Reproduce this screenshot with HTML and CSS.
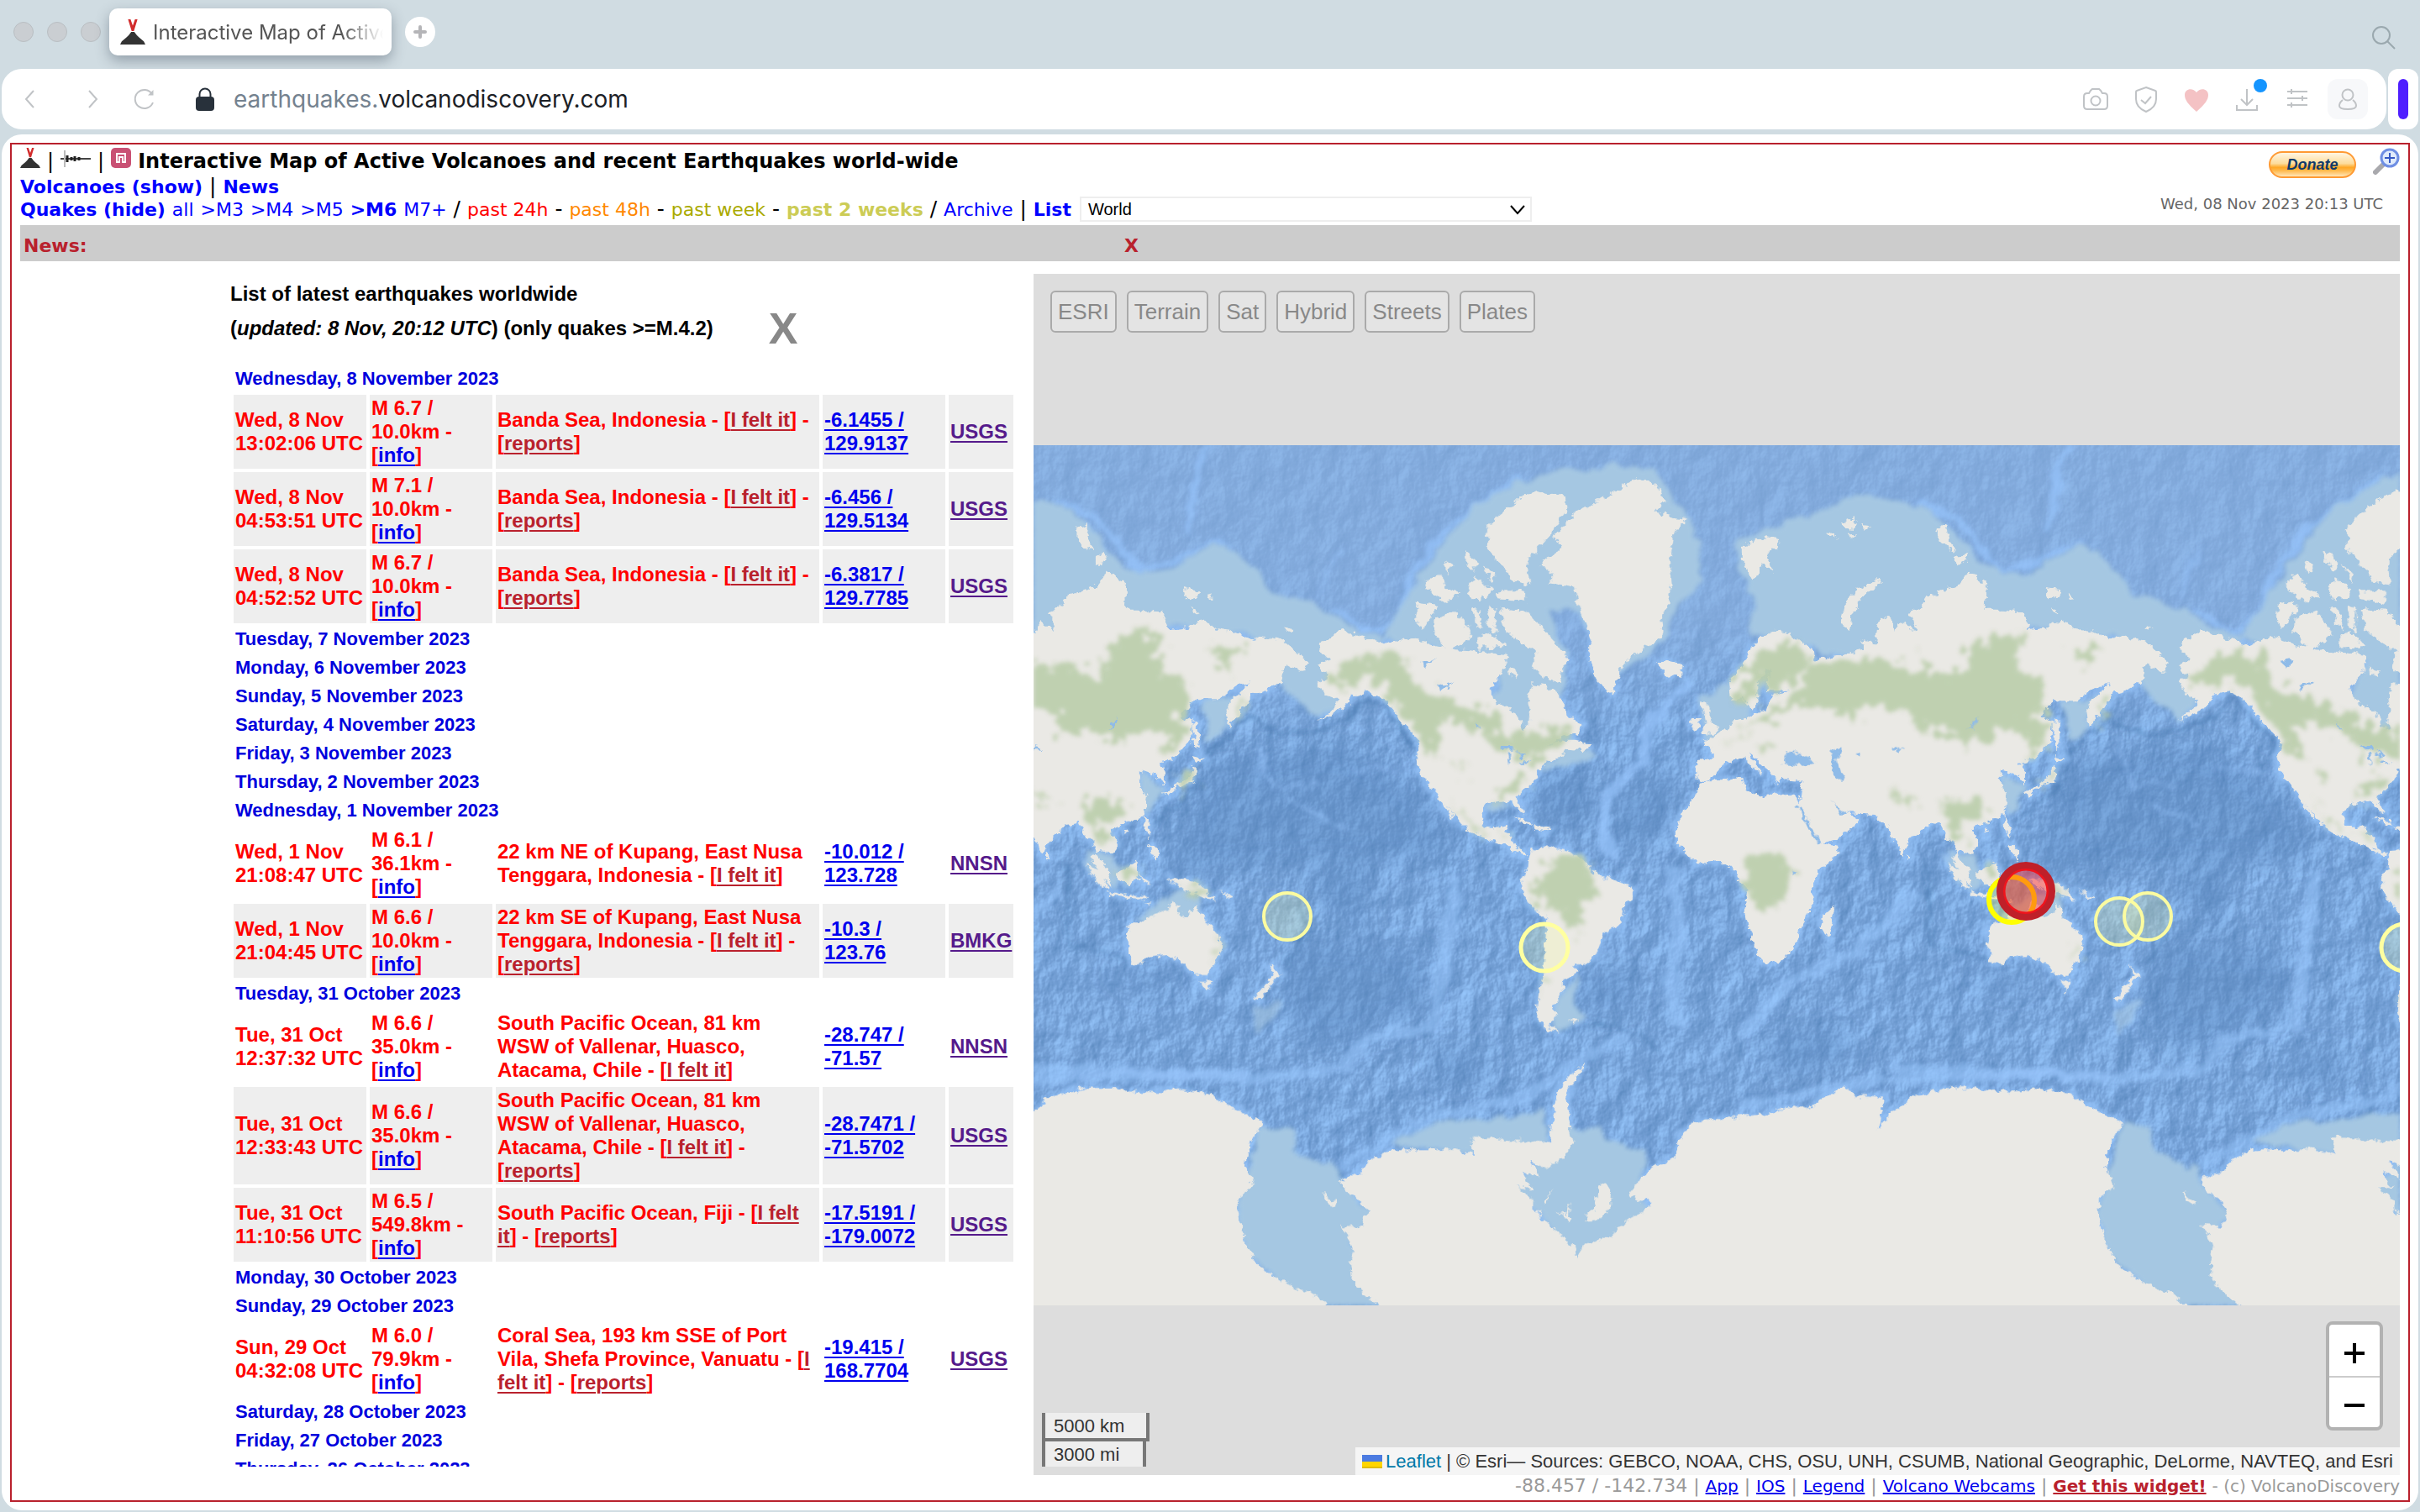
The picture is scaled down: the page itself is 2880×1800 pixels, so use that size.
FILE: index.html
```html
<!DOCTYPE html>
<html lang="en">
<head>
<meta charset="utf-8">
<title>Interactive Map of Active Volcanoes and recent Earthquakes world-wide</title>
<link rel="stylesheet" href="styles.css">
</head>
<body>
<svg class="defs" aria-hidden="true">
  <symbol id="volcano" viewBox="0 0 16 16">
    <path d="M5 0h1.6L8 4 9.400 0H11L8.700 7.500H7.300z" fill="#d22c2c"/>
    <path d="M7 8h2l1.500 2 1.500 1.500 3 2.500 1 2H0l1-2 3-2.500L5.500 10z" fill="#333"/>
  </symbol>
</svg>

<header class="browser">
  <div class="tabs">
    <span class="dot"></span><span class="dot"></span><span class="dot"></span>
    <div class="tab">
      <svg class="favicon"><use href="#volcano"/></svg>
      <span class="tab-title">Interactive Map of Active</span>
    </div>
    <button class="new-tab" aria-label="New tab"><svg width="16" height="16"><path d="M8 2v12M2 8h12" stroke="#b5b5b8" stroke-width="4" stroke-linecap="round"/></svg></button>
    <button class="icon tab-search" aria-label="Search tabs"><svg width="30" height="30" fill="none" stroke="#9aa8ae" stroke-width="2"><circle cx="12" cy="12" r="10"/><path d="M19 19l9 9"/></svg></button>
  </div>
  <div class="bars">
    <div class="toolbar">
      <nav class="nav">
        <button class="icon" aria-label="Back"><svg width="28" height="28"><path d="M18 4L9 14l9 10"/></svg></button>
        <button class="icon" aria-label="Forward"><svg width="28" height="28"><path d="M10 4l9 10-9 10"/></svg></button>
        <button class="icon reload" aria-label="Reload"><svg width="28" height="28"><path d="M24 18A11 11 0 1 1 23 8"/><path d="M18 9.500h6.500V3z" fill="#c0c3c6" stroke="none"/></svg></button>
      </nav>
      <svg class="lock" width="24" height="28"><path d="M5.500 12V8a6.500 6.500 0 0 1 13 0v4" fill="none" stroke="#28313b" stroke-width="2"/><rect x="1" y="11" width="22" height="17" rx="4" fill="#28313b"/></svg>
      <span class="url"><span class="sub">earthquakes.</span>volcanodiscovery.com</span>
      <div class="tools">
        <button class="icon" aria-label="Snapshot"><svg width="32" height="32"><path d="M2 13q0-4 4-4h2q2-4 4-5h8q2 1 4 5h2q4 0 4 4v11q0 4-4 4H6q-4 0-4-4z"/><circle cx="16" cy="18" r="5.500"/></svg></button>
        <button class="icon" aria-label="Privacy"><svg width="32" height="32"><path d="M16 2l11 4q1 0 1 2v8q0 10-12 15Q4 26 4 16V8q0-2 1-2z"/><path d="M10 17l5 4 7-8"/></svg></button>
        <button class="icon" aria-label="Favourite"><svg width="32" height="32"><path d="M16 31C6 22 2 17 2 11 2 3 12 2 16 8c4-6 14-5 14 3 0 6-4 11-14 20z" fill="#f4c2c4" stroke="none"/></svg></button>
        <button class="icon download" aria-label="Downloads"><svg width="32" height="32"><path d="M16 4v19M9 16l7 7 7-7M4 23v6h24v-6"/></svg><span class="badge"></span></button>
        <button class="icon" aria-label="Settings"><svg width="32" height="32"><path d="M4 7h24M4 15h24M4 23h24M9 4v6M22 12v6M9 20v6"/></svg></button>
        <button class="icon profile" aria-label="Profile"><svg width="32" height="32"><circle cx="16" cy="11" r="6.500"/><path d="M10 17q-4 3-4 7 0 4 10 4t10-4q0-4-4-7"/></svg></button>
      </div>
    </div>
    <button class="side" aria-label="Sidebar"><span></span></button>
  </div>
</header>

<main class="page">
  <div class="frame">
    <div class="head">
      <div class="head-left">
        <h1 class="title"><a href="#"><svg width="24" height="24"><use href="#volcano"/></svg></a><span class="bar">|</span><a href="#"><svg width="36" height="24"><path d="M0 13h36" stroke="#444" stroke-width="2"/><path d="M5 3v20" stroke="#bbb" stroke-width="2"/><path d="M8 9v8M13 11v4M17 10v6M22 11v4" stroke="#222" stroke-width="3"/></svg></a><span class="bar">|</span><a href="#"><svg width="24" height="24"><rect width="24" height="24" rx="5" fill="#c95174"/><path d="M7 17V7h10v10h-3v-6h-4v6z" fill="none" stroke="#fff" stroke-width="2"/></svg></a><span>Interactive Map of Active Volcanoes and recent Earthquakes world-wide</span></h1>
        <div class="line"><span><a href="#"><b>Volcanoes (show)</b></a> | <a href="#"><b>News</b></a></span></div>
        <div class="line"><span><a href="#"><b>Quakes (hide)</b></a> <a href="#">all</a> <a href="#">&gt;M3</a> <a href="#">&gt;M4</a> <a href="#">&gt;M5</a> <a href="#"><b>&gt;M6</b></a> <a href="#">M7+</a> / <a href="#" class="h24">past 24h</a> - <a href="#" class="h48">past 48h</a> - <a href="#" class="week">past week</a> - <a href="#" class="weeks"><b>past 2 weeks</b></a> / <a href="#">Archive</a> | <a href="#"><b>List</b></a></span><span class="select"><select aria-label="Region"><option>World</option></select><svg width="18" height="12"><path d="M1 1l8 9 8-9" fill="none" stroke="#000" stroke-width="2"/></svg></span></div>
      </div>
      <div class="head-right">
        <div class="actions">
          <button class="donate">Donate</button>
          <a href="#" aria-label="Enlarge"><svg width="32" height="32"><path d="M3 29l11-11" stroke="#a9a9ad" stroke-width="6" stroke-linecap="round"/><circle cx="20" cy="12" r="10" fill="#e0ebfb" stroke="#6f8fe4" stroke-width="3"/><path d="M20 6v12M14 12h12" stroke="#3558c4" stroke-width="2"/></svg></a>
        </div>
        <div class="clock">Wed, 08 Nov 2023 20:13 UTC</div>
      </div>
    </div>
    <div class="news"><b>News:</b><button class="news-close">X</button></div>

    <div class="content">
      <section class="list">
        <div class="list-head">
          <h2>List of latest earthquakes worldwide<br>(<i>updated: 8 Nov, 20:12 UTC</i>) (only quakes &gt;=M.4.2)</h2>
          <button class="list-close">X</button>
        </div>
        <table>
          <colgroup><col class="c1"><col class="c2"><col class="c3"><col class="c4"><col class="c5"></colgroup>
          <tr><th colspan="5">Wednesday, 8 November 2023</th></tr>
          <tr class="q alt"><td>Wed, 8 Nov 13:02:06 UTC</td><td>M 6.7 / 10.0km - [<a href="#">info</a>]</td><td>Banda Sea, Indonesia - [<a href="#" class="r">I felt it</a>] - [<a href="#" class="r">reports</a>]</td><td><a href="#">-6.1455 / 129.9137</a></td><td><a href="#" class="v">USGS</a></td></tr>
          <tr class="q alt"><td>Wed, 8 Nov 04:53:51 UTC</td><td>M 7.1 / 10.0km - [<a href="#">info</a>]</td><td>Banda Sea, Indonesia - [<a href="#" class="r">I felt it</a>] - [<a href="#" class="r">reports</a>]</td><td><a href="#">-6.456 / 129.5134</a></td><td><a href="#" class="v">USGS</a></td></tr>
          <tr class="q alt"><td>Wed, 8 Nov 04:52:52 UTC</td><td>M 6.7 / 10.0km - [<a href="#">info</a>]</td><td>Banda Sea, Indonesia - [<a href="#" class="r">I felt it</a>] - [<a href="#" class="r">reports</a>]</td><td><a href="#">-6.3817 / 129.7785</a></td><td><a href="#" class="v">USGS</a></td></tr>
          <tr><th colspan="5">Tuesday, 7 November 2023</th></tr>
          <tr><th colspan="5">Monday, 6 November 2023</th></tr>
          <tr><th colspan="5">Sunday, 5 November 2023</th></tr>
          <tr><th colspan="5">Saturday, 4 November 2023</th></tr>
          <tr><th colspan="5">Friday, 3 November 2023</th></tr>
          <tr><th colspan="5">Thursday, 2 November 2023</th></tr>
          <tr><th colspan="5">Wednesday, 1 November 2023</th></tr>
          <tr class="q"><td>Wed, 1 Nov 21:08:47 UTC</td><td>M 6.1 / 36.1km - [<a href="#">info</a>]</td><td>22 km NE of Kupang, East Nusa Tenggara, Indonesia - [<a href="#" class="r">I felt it</a>]</td><td><a href="#">-10.012 / 123.728</a></td><td><a href="#" class="v">NNSN</a></td></tr>
          <tr class="q alt"><td>Wed, 1 Nov 21:04:45 UTC</td><td>M 6.6 / 10.0km - [<a href="#">info</a>]</td><td>22 km SE of Kupang, East Nusa Tenggara, Indonesia - [<a href="#" class="r">I felt it</a>] - [<a href="#" class="r">reports</a>]</td><td><a href="#">-10.3 /<br>123.76</a></td><td><a href="#" class="v">BMKG</a></td></tr>
          <tr><th colspan="5">Tuesday, 31 October 2023</th></tr>
          <tr class="q"><td>Tue, 31 Oct 12:37:32 UTC</td><td>M 6.6 / 35.0km - [<a href="#">info</a>]</td><td>South Pacific Ocean, 81 km WSW of Vallenar, Huasco, Atacama, Chile - [<a href="#" class="r">I felt it</a>]</td><td><a href="#">-28.747 /<br>-71.57</a></td><td><a href="#" class="v">NNSN</a></td></tr>
          <tr class="q alt"><td>Tue, 31 Oct 12:33:43 UTC</td><td>M 6.6 / 35.0km - [<a href="#">info</a>]</td><td>South Pacific Ocean, 81 km WSW of Vallenar, Huasco, Atacama, Chile - [<a href="#" class="r">I felt it</a>] - [<a href="#" class="r">reports</a>]</td><td><a href="#">-28.7471 /<br>-71.5702</a></td><td><a href="#" class="v">USGS</a></td></tr>
          <tr class="q alt"><td>Tue, 31 Oct 11:10:56 UTC</td><td>M 6.5 / 549.8km - [<a href="#">info</a>]</td><td>South Pacific Ocean, Fiji - [<a href="#" class="r">I felt it</a>] - [<a href="#" class="r">reports</a>]</td><td><a href="#">-17.5191 /<br>-179.0072</a></td><td><a href="#" class="v">USGS</a></td></tr>
          <tr><th colspan="5">Monday, 30 October 2023</th></tr>
          <tr><th colspan="5">Sunday, 29 October 2023</th></tr>
          <tr class="q"><td>Sun, 29 Oct 04:32:08 UTC</td><td>M 6.0 / 79.9km - [<a href="#">info</a>]</td><td>Coral Sea, 193 km SSE of Port Vila, Shefa Province, Vanuatu - [<a href="#" class="r">I felt it</a>] - [<a href="#" class="r">reports</a>]</td><td><a href="#">-19.415 / 168.7704</a></td><td><a href="#" class="v">USGS</a></td></tr>
          <tr><th colspan="5">Saturday, 28 October 2023</th></tr>
          <tr><th colspan="5">Friday, 27 October 2023</th></tr>
          <tr><th colspan="5">Thursday, 26 October 2023</th></tr>
        </table>
      </section>

      <section class="map">
        <svg class="world" viewBox="0 0 1626 1024" preserveAspectRatio="xMidYMid slice" role="img" aria-label="World map with recent earthquakes">
          <defs>
            <filter id="sea" x="0" y="0" width="100%" height="100%" color-interpolation-filters="sRGB">
              <feTurbulence type="fractalNoise" baseFrequency=".03 .022" numOctaves="5" seed="21"/>
              <feDiffuseLighting surfaceScale="5" diffuseConstant="1" lighting-color="#fff"><feDistantLight azimuth="220" elevation="45"/></feDiffuseLighting>
              <feComponentTransfer><feFuncR type="table" tableValues=".34 .38 .46 .60"/><feFuncG type="table" tableValues=".51 .56 .63 .79"/><feFuncB type="table" tableValues=".73 .77 .84 1"/></feComponentTransfer>
            </filter>
            <filter id="coast" x="0" y="0" width="100%" height="100%" filterUnits="userSpaceOnUse">
              <feTurbulence type="fractalNoise" baseFrequency=".12" numOctaves="3" seed="3"/>
              <feDisplacementMap in="SourceGraphic" scale="11" xChannelSelector="R" yChannelSelector="G"/>
            </filter>
            <filter id="wood" x="0" y="0" width="100%" height="100%" filterUnits="userSpaceOnUse">
              <feTurbulence type="fractalNoise" baseFrequency=".07" numOctaves="4" seed="5" result="n"/>
              <feDisplacementMap in="SourceGraphic" in2="n" scale="44" xChannelSelector="R" yChannelSelector="G"/>
              <feGaussianBlur stdDeviation="2.500"/>
            </filter>
            <filter id="soft" x="0" y="0" width="100%" height="100%" filterUnits="userSpaceOnUse">
              <feTurbulence type="fractalNoise" baseFrequency=".05" numOctaves="2" seed="2" result="n"/>
              <feDisplacementMap in="SourceGraphic" in2="n" scale="18" xChannelSelector="R" yChannelSelector="G"/>
              <feGaussianBlur stdDeviation="2.500"/>
            </filter>
            <filter id="haze" x="0" y="0" width="100%" height="100%" filterUnits="userSpaceOnUse"><feGaussianBlur stdDeviation="14"/></filter>
            <linearGradient id="north" x2="0" y2="1"><stop offset="0" stop-color="#8cb1e0" stop-opacity=".6"/><stop offset=".2" stop-color="#8cb1e0" stop-opacity=".6"/><stop offset=".34" stop-color="#8cb1e0" stop-opacity="0"/></linearGradient>

            <g id="land">
              <g transform="translate(0 -10) scale(.52934 .33333)">
                <path d="M640 745L690 690 740 715 800 740 850 715 905 745 950 760 1000 765 1060 780 1065 800 1050 850 1025 900 1030 940 1060 965 1085 990 1100 1045 1112 1040 1115 990 1110 940 1120 880 1150 885 1185 930 1200 990 1235 1030 1225 1060 1190 1070 1160 1105 1185 1085 1215 1085 1250 1100 1240 1120 1200 1115 1185 1140 1160 1160 1135 1190 1125 1230 1085 1290 1105 1345 1090 1330 1075 1300 1020 1310 1010 1350 1015 1390 1040 1400 1065 1385 1060 1410 1080 1435 1085 1470 1110 1490 1100 1495 1060 1460 1010 1430 975 1405 960 1380 935 1330 915 1290 895 1255 870 1200 860 1140 870 1090 840 1040 815 990 790 940 755 910 720 925 690 975 640 1015 685 950 650 910 640 880 665 850 635 820 665 795 645 760z"/>
                <path d="M903 1270L915 1285 945 1355 942 1368z"/>
                <path d="M865 590L910 600 890 650 875 690 860 650zM900 650L950 620 970 660 985 710 960 745 930 760 900 700zM985 610L1002 620 1010 690 995 670zM1020 605L1040 615 1038 700 1022 680zM1050 615L1110 620 1140 680 1170 730 1205 800 1185 830 1185 880 1150 860 1120 820 1130 770 1090 730 1060 690zM1068 825L1085 835 1090 862 1070 850zM1000 710L1030 700 1060 750 1000 755z"/>
                <path d="M1130 195L1190 210 1205 250 1180 310 1140 390 1110 440 1115 530 1080 520 1060 480 1020 400 1020 330 1045 280 1090 220zM1045 550L1105 550 1105 590 1045 580zM880 520L910 490 930 540 960 560 925 590 885 545zM968 410L1000 450 990 480 970 440zM925 440L945 460 930 490zM990 500L1030 540 1020 575 990 580 975 540zM1010 460L1035 490 1030 520z"/>
                <path d="M1355 150L1400 170 1420 230 1395 270 1440 285 1470 290 1440 350 1430 440 1435 520 1425 600 1410 650 1415 710 1360 765 1320 830 1300 920 1270 880 1250 800 1255 720 1235 640 1215 540 1160 520 1170 490 1140 455 1190 400 1170 360 1210 280 1290 210z"/>
                <path d="M1402 805L1430 798 1460 820 1455 850 1425 860zM1500 940L1520 960 1520 1010 1540 1040 1530 1060 1500 1062 1512 1020zM1480 1005L1500 1005 1498 1045 1480 1050z"/>
                <path d="M1075 1360L1110 1370 1125 1390 1100 1380zM1130 1390L1165 1398 1150 1408 1128 1402z"/>
              </g>
              <g transform="translate(820 -10) scale(.52934 .33333)">
                <path d="M-59 1155L-55 1225-35 1232-15 1205 5 1170 30 1150 50 1140 60 1170 90 1210 75 1175 60 1130 85 1160 115 1210 125 1240 135 1210 130 1195 140 1225 180 1230 175 1290 175 1320 220 1455 260 1435 300 1385 305 1365 280 1345 290 1345 340 1350 370 1385 405 1495 420 1440 460 1385 490 1380 500 1420 520 1450 530 1500 555 1555 560 1610 540 1570 515 1500 540 1480 560 1490 575 1460 560 1400 590 1380 635 1350 640 1290 625 1245 625 1190 665 1210 680 1250 680 1200 670 1160 700 1150 740 1080 745 1020 715 1000 745 940 800 940 830 900 870 880 820 960 825 1040 865 950 875 920 900 910 940 880 945 840 955 810 990 840 1005 810 950 730 900 715 880 725 840 700 790 685 760 650 735 680 690 690 675 625 620 620 590 620 595 530 550 480 530 530 460 570 445 610 420 630 435 690 400 660 385 700 375 650 355 640 345 740 310 725 320 760 240 790 210 800 200 760 150 700 120 690 80 720 50 800 15 880 20 950 45 930 65 980 80 950 80 880 110 820 100 870 100 910 150 905 110 925 100 970 60 1000 30 1015 0 1050-40 1085-45 1100-25 1110-25 1150z"/>
                <path d="M-50 1240L-20 1225 0 1225 40 1215 45 1250 90 1290 110 1270 160 1285 175 1310 190 1380 215 1450 265 1465 245 1510 210 1560 200 1620 205 1664 175 1757 165 1809 135 1866 95 1886 80 1850 60 1768 50 1685 55 1623 35 1582 30 1550 0 1520-30 1525-60 1525-85 1480-104 1450-104 1390-80 1320-60 1280zM252 1675L240 1790 220 1760 228 1710z"/>
                <path d="M350 505L355 520 310 580 290 640 285 690 265 670 275 600 300 550zM45 390L100 355 130 370 120 400 95 420 115 480 90 450 70 515 45 440zM230 345L250 335 258 360zM270 310L300 285 295 330 280 325zM310 315L335 318 320 335zM285 350L300 345 295 370zM480 330L500 315 520 410 490 380zM525 430L545 410 552 440 525 465zM725 540L760 550 755 575 730 580zM775 560L792 580 780 582zM738 610L755 625 745 630zM945 685L955 678 968 688 955 695z"/>
                <path d="M745 1010L755 1020 757 1115 746 1100zM745 1140L770 1150 750 1168zM745 1175L752 1190 745 1235 710 1250 688 1282 680 1268 720 1235 738 1200zM632 1350L645 1390 650 1430 635 1400zM645 1450L665 1480 665 1515 650 1480zM415 1485L422 1500 416 1515zM590 1400L598 1408 588 1415zM630 1330L637 1345 632 1355z"/>
              </g>
              <g transform="translate(0 500) scale(.52934 .34439)">
                <path d="M575 20L615-10 622 50 600 70 575 50z" transform="translate(1549)"/>
                <path d="M2053-10L2085 20 2104 80 2090 75 2065 30zM2104 93L2185 108 2185 118 2110 106zM2235 45L2285 50 2315 75 2330 100 2345 125 2315 105 2275 90 2255 65zM2172 22L2180 45 2195 60 2180 65zM2345 80L2380 110 2376 116zM2205 125L2195 133 2180 130z"/>
                <path d="M2204 170L2234 155 2244 130 2264 140 2259 165 2279 180 2294 160 2299 130 2314 175 2354 240 2359 290 2339 350 2324 380 2299 380 2274 340 2234 310 2194 320 2174 340 2154 340 2144 250 2149 210 2184 190zM2309 400L2334 400 2324 435z"/>
                <path d="M530 340L545 370 557 378 540 402 520 440 510 470 497 462 530 400 538 378z"/>
                <path d="M1118-53L1165-60 1200-48 1235-20 1265 35 1300 50 1345 75 1345 110 1325 150 1320 200 1280 240 1270 290 1240 345 1215 340 1225 370 1190 400 1190 440 1170 480 1175 520 1160 555 1185 580 1150 565 1130 520 1135 450 1145 380 1150 270 1155 190 1130 160 1105 110 1095 50 1110 10 1112-30zM1207 530L1224 530 1218 545z"/>
                <path d="M810 1560L750 1490 715 1440 710 1370 718 1330 705 1270 690 1245 735 1250 752 1205 735 1160 700 1125 690 1080 740 1060 755 1020 800 985 900 985 940 980 990 1000 985 940 1100 950 1160 955 1165 900 1175 800 1190 750 1240 685 1200 790 1205 900 1212 960 1195 1010 1150 1050 1115 1025 1140 1085 1100 1060 1120 1120 1088 1110 1125 1160 1125 1190 1170 1260 1218 1320 1220 1360 1240 1310 1300 1285 1310 1250 1380 1190 1385 1150 1360 1165 1340 1130 1380 1050 1440 1010 1450 950 1480 890 1568 870 1660 855 1720 830 1745 840 1780 800 1820 765 1850 795 1910 800 1900 915 1920 870 1975 800 2050 770 2110 770 2150 780 2220 785 2250 770 2330 790 2380 840 2450 890 2420 960 2410 1040 2430 1110 2395 1150 2395 1200 2410 1300 2440 1390 2520 1460 2560 1480 2620 1560z"/>
                <path d="M1280 1095L1300 1120 1298 1180 1280 1225 1240 1230 1240 1210 1262 1190 1268 1110zM1165 1120L1155 1172 1148 1165zM1207 1165L1205 1230 1175 1200 1200 1210zM650 1130L680 1165 675 1180 655 1160z"/>
              </g>
            </g>

            <g id="shelf" fill="#a5c7e2">
              <g transform="translate(820 -10) scale(.52934 .33333)">
                <path d="M60 690L70 570 40 480 30 370 180 290 300 205 380 230 470 260 530 360 590 465 675 490 805 380 860 440 930 560 1045 620 1085 670 1175 720 1100 760 1060 980 1025 1005 945 900 900 720 600 660 300 800z"/>
                <path d="M760 935L850 935 810 1060 775 1080zM620 1190L680 1250 660 1330 635 1350zM-50 930L110 830 60 1010-30 1100zM500 1480L570 1500 580 1570 530 1600z"/>
              </g>
              <g transform="translate(0 -10) scale(.52934 .33333)"><path d="M780 725L845 560 910 400 990 250 1100 150 1300 100 1400 110 1430 200 1480 300 1500 400 1500 510 1440 640 1420 720 1310 860 1220 620 1160 620 1200 780 1195 900 1100 1050 1020 960 1060 800z"/><path d="M1200 1070L1270 1150 1230 1160 1130 1200 1190 1110zM1000 1305L1090 1310 1020 1330z"/></g>
              <g transform="translate(0 500) scale(.52934 .34439)"><path d="M2160 180L2265 90 2310 120 2310 190 2250 210zM2040-20L2130 40 2110 90zM1225 370L1215 500 1240 520 1200 560 1180 570 1165 500zM1205 900L1270 915 1310 970 1375 985 1360 1100 1385 1200 1220 1370 1080 1120zM515 900L580 900 590 1000 650 1035 690 1045 690 1100 760 1200 720 1300 800 1560 640 1560 480 1340 455 1200zM800 960L900 890 1000 880 1150 850 1160 960 990 1000z"/><path d="M500 490L560 470 530 550 495 590z" opacity=".6"/></g>
            </g>

            <g id="woods" fill="#bacdaa">
              <g transform="translate(820 -10) scale(.52934 .33333)">
                <path d="M190 810L280 795 400 800 420 850 455 790 470 850 530 850 600 690 670 710 665 840 725 870 735 950 700 1000 740 1060 690 1150 680 1060 640 1050 560 1090 520 1050 440 1060 430 990 310 960 300 1040 285 980 190 960 120 1000 30 1080 0 1110 60 1040 120 960 180 900zM90 770L150 730 190 800 150 890 110 900 90 850 60 950 25 930 50 840zM540 750L580 740 570 790zM780 750L860 750 820 830zM840 960L860 940 840 1040zM490 1310L560 1290 600 1330 570 1380 530 1380 560 1450 530 1450zM380 1250L400 1300 460 1330 440 1320zM750 1180L740 1235 700 1250zM80 1080L120 1100 110 1130z"/>
                <path d="M50 1500L120 1490 150 1560 140 1640 90 1700 60 1640z"/>
              </g>
              <g transform="translate(0 -10) scale(.52934 .33333)"><path d="M670 870L700 800 760 770 830 780 860 890 940 940 1030 990 1080 1060 1200 1050 1190 1100 1130 1150 1060 1130 1010 1050 920 1010 900 1090 920 1150 880 1120 840 1010 770 860 700 900zM1030 1290L1090 1210 1110 1220 1070 1290zM950 1190L965 1180 965 1230zM935 1300L980 1370 1010 1420 990 1410zM1040 1410L1080 1440 1070 1450z"/></g>
              <g transform="translate(0 500) scale(.52934 .34439)"><path d="M1125 60L1150 0 1190-30 1250 0 1270 80 1220 140 1240 240 1200 220 1180 150 1130 120zM1145 370L1150 420 1140 470zM2260 60L2320 80 2310 100zM2345 250L2355 290 2330 350 2345 300zM2130 20L2165 0 2160 60z"/></g>
            </g>

            <g id="lakes" fill="#8fbbe8">
              <g transform="translate(820 -10) scale(.52934 .33333)">
                <path d="M135 1170L150 1125 175 1130 210 1165 180 1175zM245 1125L270 1115 255 1150 275 1225 255 1225 245 1170zM300 1128L310 1128 305 1142zM165 1315L175 1320 220 1445 212 1455zM245 1300L265 1330 282 1345 265 1347zM575 995L570 1020 550 1045 560 1025zM385 1110L410 1118 385 1120zM155 1550L165 1560 158 1575z"/>
              </g>
              <g transform="translate(0 -10) scale(.52934 .33333)"><path d="M1050 1105L1075 1100 1080 1118 1050 1115zM1065 1130L1075 1125 1070 1175zM1085 1120L1105 1140 1095 1150zM1095 1160L1120 1158 1100 1170zM870 800L900 795 880 825zM910 890L945 875 915 910zM995 1015L1010 1050 1000 1040z"/></g>
            </g>

            <g id="relief" fill="none" stroke-linecap="round" stroke-linejoin="round">
              <g transform="translate(0 -10) scale(.52934 .33333)" stroke="#97c4fc">
                <path d="M1470 880L1380 1030 1370 1160 1290 1280 1280 1400 1300 1500" stroke-width="30" opacity=".7"/>
                <path d="M350 330L370 100 400 30M60 240L150 300 240 480 330 440 420 375M680 620L760 700 830 640 850 500 930 330 1090 150" stroke-width="20" opacity=".7"/>
                <path d="M480 985L520 1040 580 1065 650 1045 700 1010 755 935 800 980 860 1120M480 1000L370 1170 365 1260 260 1390" stroke="#4d7db3" stroke-width="8" opacity=".8"/>
                <path d="M500 1080L540 1250 640 1240M570 1300L700 1395M720 1190L860 1190M640 570L690 390" stroke-width="8" opacity=".6"/>
              </g>
              <g transform="translate(0 500) scale(.52934 .34439)" stroke="#97c4fc">
                <path d="M1440 20L1450 250 1430 400 1450 550M950 40L930 250 900 560 750 600 700 700 500 740M1980 100L1850 300 1700 400 1600 580M520 740L0 700M1940 740L2400 720M1900 740L1600 830M700 1030L900 870 1100 810 1240 660 1320 600" stroke-width="34" opacity=".55"/>
                <path d="M1100 110L1150 200 1150 300 1130 560M1180 570L1290 550 1370 590 1400 640M600 130L610 220 570 340M2010 0L2012 270 2180 340M2060 20L2110 90 2200 120" stroke="#4d7db3" stroke-width="7" opacity=".8"/>
              </g>
            </g>
            <g id="deep" fill="#5482ba">
              <g transform="translate(0 -10) scale(.52934 .33333)"><path d="M400 1150L700 1100 860 1250 950 1500 300 1560zM1120 1240L1240 1180 1270 1400 1150 1380zM1310 1300L1440 1180 1430 1400 1300 1500z"/></g>
              <g transform="translate(0 500) scale(.52934 .34439)"><path d="M600 250L880 300 880 500 640 650 560 480zM1240 380L1340 370 1350 490 1230 490zM1640 620L1800 560 1850 650 1700 740zM600 50L760 0 740 250zM2090 370L2250 390 2200 440zM900 640L1020 660 1000 740 900 740z"/></g>
            </g>
            <g id="quakes" fill="#ff9" fill-opacity=".22" stroke="#fbfba0" stroke-width="4">
              <circle cx="302" cy="561" r="28"/><circle cx="608" cy="598" r="28" stroke="#ffffa0" stroke-width="5"/><circle cx="1292" cy="567" r="28"/>
            </g>
          </defs>
          <rect width="1626" height="1024" filter="url(#sea)"/>
          <g filter="url(#haze)" opacity=".4"><use href="#deep" x="-1024"/><use href="#deep"/><use href="#deep" x="1024"/></g>
          <rect width="1626" height="1024" fill="url(#north)"/>
          <g filter="url(#soft)"><use href="#relief" x="-1024"/><use href="#relief"/><use href="#relief" x="1024"/></g>
          <g filter="url(#soft)" fill="#94c2f8" stroke="#94c2f8" stroke-width="16" opacity=".75"><use href="#land" x="-1024"/><use href="#land"/><use href="#land" x="1024"/></g>
          <g filter="url(#soft)"><use href="#shelf" x="-1024"/><use href="#shelf"/><use href="#shelf" x="1024"/></g>
          <g filter="url(#coast)" fill="#eae9e5"><use href="#land" x="-1024"/><use href="#land"/><use href="#land" x="1024"/></g>
          <g filter="url(#wood)" opacity=".9"><use href="#woods" x="-1024"/><use href="#woods"/><use href="#woods" x="1024"/></g>
          <g filter="url(#coast)"><use href="#lakes" x="-1024"/><use href="#lakes"/><use href="#lakes" x="1024"/></g>
          <use href="#quakes"/><use href="#quakes" x="1024"/>
          <circle cx="1164" cy="541" r="27" fill="#ff0" fill-opacity=".2" stroke="#ff0" stroke-width="6"/>
          <circle cx="1181" cy="531" r="27" fill="#f22" fill-opacity=".45" stroke="#f0141c" stroke-width="5"/>
          <circle cx="1181" cy="531" r="31" fill="none" stroke="#bf2029" stroke-width="8"/>
        </svg>
        <div class="layers"><button>ESRI</button><button>Terrain</button><button>Sat</button><button>Hybrid</button><button>Streets</button><button>Plates</button></div>
        <div class="scale"><div class="km">5000 km</div><div class="mi">3000 mi</div></div>
        <div class="zoom"><button aria-label="Zoom in"><svg width="26" height="26"><path d="M13 1v24M1 13h24"/></svg></button><button aria-label="Zoom out"><svg width="26" height="26"><path d="M1 13h24"/></svg></button></div>
        <div class="credit"><svg width="24" height="16"><rect width="24" height="8" fill="#4c7be1"/><rect y="8" width="24" height="6" fill="#ffd500"/><rect y="14" width="24" height="2" fill="#e0bc00"/></svg><span><a href="#">Leaflet</a> | © Esri— Sources: GEBCO, NOAA, CHS, OSU, UNH, CSUMB, National Geographic, DeLorme, NAVTEQ, and Esri</span></div>
      </section>
    </div>

    <footer class="foot">-88.457 / -142.734 | <a href="#">App</a> | <a href="#">IOS</a> | <a href="#">Legend</a> | <a href="#">Volcano Webcams</a> | <a href="#" class="r"><b>Get this widget!</b></a> <small>- (c) VolcanoDiscovery</small></footer>
  </div>
</main>
</body>
</html>
```

FILE: styles.css
```css
* { box-sizing: border-box; }
body {
  margin: 0;
  height: 100vh;
  display: flex;
  flex-direction: column;
  background: #d0dce2;
  font-family: "Liberation Sans", Arial, sans-serif;
  font-size: 24px;
  color: #000;
}
button { margin: 0; padding: 0; border: 0; background: none; font: inherit; color: inherit; }
svg { display: block; flex: none; }
.defs { position: absolute; width: 0; height: 0; }

/* browser window */
.tabs { display: flex; align-items: center; height: 82px; padding: 0 28px 6px 16px; }
.dot { width: 24px; height: 24px; margin-right: 16px; border: 1px solid #b9bec2; border-radius: 50%; background: #caced2; }
.tab {
  display: flex;
  align-items: center;
  gap: 8px;
  width: 336px;
  height: 56px;
  margin-left: -6px;
  padding: 0 10px 0 12px;
  border-radius: 10px;
  background: #fff;
  box-shadow: 0 6px 16px rgba(70, 85, 100, .45);
}
.favicon { width: 32px; height: 30px; }
.tab-title {
  flex: 1;
  overflow: hidden;
  white-space: nowrap;
  font: 24px Inter, sans-serif;
  color: #555;
  -webkit-mask-image: linear-gradient(90deg, #000 82%, transparent);
  mask-image: linear-gradient(90deg, #000 82%, transparent);
}
.new-tab { display: flex; align-items: center; justify-content: center; width: 36px; height: 36px; margin-left: 16px; border-radius: 50%; background: #fff; }
.tab-search { margin-left: auto; padding-top: 14px; }
.bars { display: flex; gap: 2px; padding: 0 2px; }
.toolbar { flex: 1; display: flex; align-items: center; height: 72px; padding: 0 30px 0 20px; border-radius: 24px; background: #fff; }
.toolbar .icon svg { fill: none; stroke: #c0c3c6; stroke-width: 2; }
.nav { display: flex; gap: 46px; }
.reload { margin-left: -12px; }
.lock { margin: 0 22px 0 46px; }
.url { font: 28px Inter, sans-serif; color: #1c2126; }
.sub { color: #74828f; }
.tools { display: flex; align-items: center; gap: 28px; margin-left: auto; }
.download { position: relative; }
.badge { position: absolute; top: -8px; right: -8px; width: 16px; height: 16px; border-radius: 50%; background: #1595ff; }
.profile { margin: 0 -8px; padding: 8px; border-radius: 12px; background: #f7f8fa; }
.side { display: flex; align-items: center; justify-content: center; width: 36px; border-radius: 12px; background: #fff; }
.side span { width: 12px; height: 48px; border-radius: 6px; background: #4f1fff; }

/* page */
.page { flex: 1; min-height: 0; margin: 6px 2px 2px; padding: 10px; border-radius: 24px; background: #fff; }
.frame { display: flex; flex-direction: column; height: 100%; padding: 4px 10px; border: 2px solid #b9212d; }
a { color: #00e; }
.head, .foot, .news { font-family: "DejaVu Sans", Verdana, sans-serif; }
.head { display: flex; justify-content: space-between; font-size: 25px; }
.head a { text-decoration: none; }
.title { display: flex; align-items: center; gap: 8px; height: 32px; margin: 0; font-size: 24px; }
.title a { align-self: flex-start; }
.bar { font-weight: 400; }
.line { display: flex; align-items: center; gap: 10px; height: 27px; line-height: 27px; }
.line a { font-size: 22px; color: #00f; }
.line .h24 { color: #f00; }
.line .h48 { color: #f80; }
.line .week { color: #aa0; }
.line .weeks { color: #cc5; }
.select { position: relative; }
.select select { display: block; appearance: none; width: 538px; height: 30px; padding: 0 8px; border: 2px solid #eee; background: #fff; font: 20px "Liberation Sans", Arial, sans-serif; color: #000; }
.select svg { position: absolute; right: 8px; top: 10px; }
.head-right { text-align: right; }
.actions { display: flex; justify-content: flex-end; gap: 20px; height: 54px; }
.donate {
  width: 104px;
  height: 32px;
  margin-top: 4px;
  border: 2px solid #ff9a33;
  border-radius: 16px;
  background: linear-gradient(#fff6e2, #fddc9c 45%, #ffa825 62%, #ffb84a 75%, #ffe6b8);
  font: italic bold 18px "Liberation Sans", Arial, sans-serif;
  color: #0f3a69;
}
.clock { padding-right: 20px; font-size: 18px; line-height: 26px; color: #666; }
.news { display: grid; grid-template-columns: 1310fr 1514fr; align-items: center; justify-items: start; height: 43px; margin-top: 6px; padding: 5px 4px 0; background: #ccc; font-size: 22px; color: #b9212d; }
.news-close { font-weight: 700; }
.content { flex: 1; min-height: 0; display: grid; grid-template-columns: 1206fr 1626fr; grid-template-rows: 100%; padding-top: 15px; }

/* list */
.list { width: 936px; height: calc(100% - 10px); margin: 0 20px 0 auto; overflow: hidden; }
.list-head { display: flex; align-items: flex-end; gap: 66px; height: 106px; padding-bottom: 21px; }
.list-head h2 { margin: 0; font-size: 24px; line-height: 41px; }
.list-close { font-weight: 700; font-size: 52px; line-height: 40px; color: #888; }
table { table-layout: fixed; width: 936px; border-collapse: separate; border-spacing: 4px; font-size: 24px; line-height: 28px; font-weight: 700; }
.c1 { width: 158px; }
.c2, .c4 { width: 146px; }
.c3 { width: 385px; }
.c5 { width: 77px; }
th { height: 30px; padding: 2px; text-align: left; font-size: 22px; line-height: 26px; color: #00d; }
td { padding: 2px; }
.q { color: #f00; }
.alt td { background: #eee; }
td a { text-underline-offset: 3px; text-decoration-thickness: 2px; }
.r { color: #b9212d; }
.v { color: #551a8b; }

/* map */
.map { position: relative; display: flex; align-items: center; padding-top: 2px; overflow: hidden; background: #ddd; }
.world { width: 100%; height: 1024px; }
.layers { position: absolute; left: 20px; top: 20px; display: flex; gap: 12px; }
.layers button { height: 50px; padding: 0 7px; border: 2px solid #aaa; border-radius: 6px; background: #e4e4e4; font-size: 26px; color: #888; }
.scale { position: absolute; left: 10px; bottom: 10px; font-size: 22px; color: #333; }
.scale div { padding-left: 10px; border: 4px solid #777; border-top: 0; background: #eee; }
.km { width: 128px; height: 34px; line-height: 32px; }
.scale .mi { width: 124px; height: 30px; border-bottom: 0; line-height: 32px; }
.zoom { position: absolute; right: 20px; bottom: 53px; width: 68px; border: 4px solid #b2b2b2; border-radius: 8px; background: #fff; }
.zoom button { display: flex; align-items: center; justify-content: center; width: 60px; height: 61px; padding-top: 6px; }
.zoom button + button { border-top: 2px solid #ccc; }
.zoom svg { stroke: #000; stroke-width: 4; }
.credit { position: absolute; right: 0; bottom: 0; display: flex; align-items: center; gap: 4px; height: 33px; padding: 0 8px; background: #f5f5f5; font-size: 22px; color: #333; white-space: nowrap; }
.credit a { color: #0078a8; text-decoration: none; }
.foot { height: 26px; text-align: right; font-size: 22px; line-height: 26px; color: #999; }
.foot a, .foot small { font-size: 20px; }
.foot .r { color: #b9212d; }
```
